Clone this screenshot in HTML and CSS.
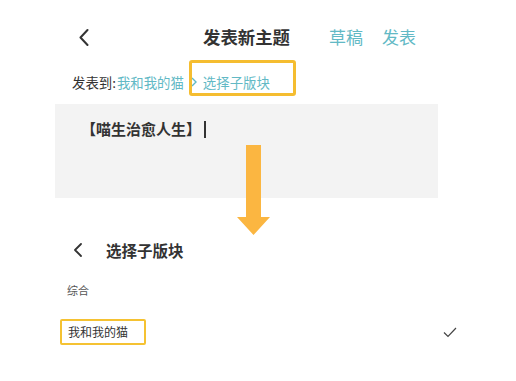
FILE: index.html
```html
<!DOCTYPE html>
<html lang="zh">
<head>
<meta charset="utf-8">
<link rel="stylesheet" href="styles.css">
</head>
<body>
<div class="page">
  <div class="header">
    <svg class="back" width="12" height="18" viewBox="0 0 12 18"><path d="M9.5 2 L2.5 9.5 L9.5 17" fill="none" stroke="#333" stroke-width="2" stroke-linecap="round" stroke-linejoin="round"/></svg>
    <div class="title">发表新主题</div>
    <div class="actions"><span>草稿</span><span>发表</span></div>
  </div>
  <div class="crumb">
    <span class="label">发表到:</span><span class="teal">我和我的猫</span><span class="hl"><svg class="sep" width="6" height="10" viewBox="0 0 6 10"><path d="M1 1 L5 5 L1 9" fill="none" stroke="#62b9c5" stroke-width="1.4"/></svg><span class="teal">选择子版块</span></span>
  </div>
  <div class="editor">
    <span class="draft">【喵生治愈人生】</span><span class="caret"></span>
  </div>
  <svg class="arrow" width="33" height="90" viewBox="0 0 33 90"><polygon points="9,0 24,0 24,72 33,72 16.5,90 0,72 9,72" fill="#fbb641"/></svg>
  <div class="sub-header">
    <svg class="back2" width="12" height="16" viewBox="0 0 12 16"><path d="M9 2 L3 8 L9 14" fill="none" stroke="#333" stroke-width="1.8" stroke-linecap="round" stroke-linejoin="round"/></svg>
    <div class="sub-title">选择子版块</div>
  </div>
  <div class="group">综合</div>
  <div class="row">
    <span class="item">我和我的猫</span>
    <svg class="check" width="14" height="11" viewBox="0 0 14 11"><path d="M1 5.5 L5 9.5 L13 1" fill="none" stroke="#444" stroke-width="1.2"/></svg>
  </div>
</div>
</body>
</html>
```
FILE: styles.css
```css
html, body {
  margin: 0;
  padding: 0;
  background: #fff;
}
body {
  font-family: "Noto Sans CJK SC", "Noto Sans", sans-serif;
  color: #333;
}
.page {
  position: relative;
  width: 516px;
  height: 381px;
  overflow: hidden;
}
.header {
  display: flex;
  align-items: center;
  height: 24px;
  margin-top: 25px;
  padding-left: 78px;
}
.back { display: block; }
.title {
  margin-left: 113px;
  font-size: 17.4px;
  font-weight: 700;
  line-height: 24px;
  color: #333;
}
.actions {
  display: flex;
  gap: 19px;
  margin-left: 39px;
  font-size: 17px;
  line-height: 24px;
  color: #62b9c5;
}
.crumb {
  display: flex;
  align-items: center;
  margin-top: 23px;
  padding-left: 72px;
  height: 20px;
  font-size: 13.4px;
  line-height: 20px;
}
.label { color: #333; margin-right: 1px; }
.teal { color: #62b9c5; }
.hl {
  position: relative;
  display: flex;
  align-items: center;
  margin-left: 7px;
}
.hl::after {
  content: "";
  position: absolute;
  left: -2px;
  top: -12px;
  width: 101px;
  height: 30px;
  border: 3px solid #f5bd30;
  border-radius: 3px;
}
.sep { display: block; margin-right: 6px; }
.editor {
  margin-top: 12px;
  margin-left: 55px;
  width: 357px;
  padding: 14px 0 58px 26px;
  height: 22px;
  background: #f3f3f3;
  display: flex;
  align-items: center;
}
.draft {
  font-size: 15px;
  font-weight: 700;
  line-height: 22px;
  color: #333;
}
.caret {
  display: inline-block;
  width: 2px;
  height: 17px;
  margin-left: 3px;
  background: #333;
}
.arrow {
  position: absolute;
  left: 237px;
  top: 145px;
}
.sub-header {
  display: flex;
  align-items: center;
  height: 24px;
  margin-top: 40px;
  padding-left: 72px;
}
.back2 { display: block; }
.sub-title {
  margin-left: 22px;
  font-size: 15.5px;
  font-weight: 700;
  line-height: 24px;
  color: #333;
}
.group {
  margin-top: 20px;
  padding-left: 67px;
  font-size: 11px;
  line-height: 16px;
  color: #555;
}
.row {
  display: flex;
  align-items: center;
  justify-content: space-between;
  margin-top: 21px;
  margin-left: 60px;
  width: 397px;
}
.item {
  display: block;
  width: 76px;
  height: 22px;
  border: 2px solid #f5c232;
  border-radius: 2px;
  padding-left: 6px;
  font-size: 12px;
  line-height: 22px;
  color: #333;
}
.check { display: block; }
```
